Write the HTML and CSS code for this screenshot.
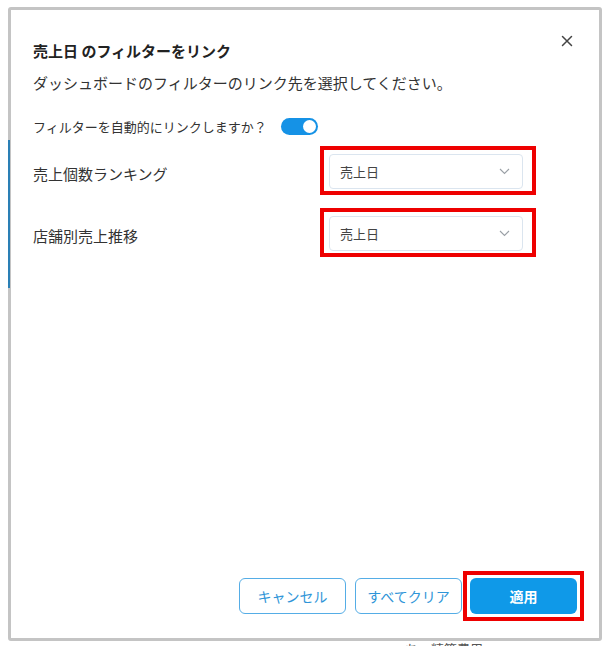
FILE: index.html
```html
<!DOCTYPE html>
<html lang="ja">
<head>
  <meta charset="utf-8">
  <title>フィルターをリンク</title>
  <link rel="stylesheet" href="styles.css">
</head>
<body>
  <div class="backdrop">
    <span class="edge-mark"></span>
    <div class="modal">
      <button class="close" aria-label="閉じる">
        <svg width="12" height="12" viewBox="0 0 12 12" fill="none" stroke="#444" stroke-width="1.5" stroke-linecap="round">
          <path d="M1.5 1.5l9 9M10.5 1.5l-9 9"/>
        </svg>
      </button>

      <h2 class="title">売上日 のフィルターをリンク</h2>
      <p class="desc">ダッシュボードのフィルターのリンク先を選択してください。</p>

      <div class="auto-link">
        <span>フィルターを自動的にリンクしますか？</span>
        <span class="toggle"><span class="knob"></span></span>
      </div>

      <div class="row">
        <span class="row-label">売上個数ランキング</span>
        <div class="mark mark-select">
          <div class="select">
            <span>売上日</span>
            <svg width="11" height="7" viewBox="0 0 11 7" fill="none" stroke="#9aa0a6" stroke-width="1.1">
              <path d="M1 1l4.5 4.5L10 1"/>
            </svg>
          </div>
        </div>
      </div>

      <div class="row">
        <span class="row-label">店舗別売上推移</span>
        <div class="mark mark-select">
          <div class="select">
            <span>売上日</span>
            <svg width="11" height="7" viewBox="0 0 11 7" fill="none" stroke="#9aa0a6" stroke-width="1.1">
              <path d="M1 1l4.5 4.5L10 1"/>
            </svg>
          </div>
        </div>
      </div>

      <div class="footer">
        <button class="btn btn-outline">キャンセル</button>
        <button class="btn btn-outline">すべてクリア</button>
        <div class="mark mark-btn">
          <button class="btn btn-primary">適用</button>
        </div>
      </div>
    </div>
  </div>
  <div class="below">ち　精算費用</div>
</body>
</html>
```

FILE: styles.css
```css
html, body { margin: 0; padding: 0; }
body {
  background: #fff;
  font-family: "Noto Sans CJK JP", "Noto Sans", sans-serif;
  color: #333;
  overflow: hidden;
}

.backdrop {
  position: relative;
  margin: 7px 0 0 8px;
  width: 588px;
  height: 628px;
  border: 3px solid #c4c4c4;
  border-radius: 3px;
}
.edge-mark {
  position: absolute;
  left: -3px;
  top: 130px;
  width: 2px;
  height: 148px;
  background: #2a7fb5;
}

.modal {
  position: relative;
  box-sizing: border-box;
  height: 100%;
  background: #fff;
  border-radius: 4px;
  padding: 31px 15px 17px 22px;
  display: flex;
  flex-direction: column;
}

.close {
  position: absolute;
  top: 21px;
  right: 22px;
  width: 20px;
  height: 20px;
  padding: 0;
  border: none;
  background: none;
  display: flex;
  align-items: center;
  justify-content: center;
}

.title {
  margin: 0;
  font-size: 15px;
  line-height: 20px;
  font-weight: bold;
  color: #222;
}
.desc {
  margin: 12px 0 0;
  font-size: 15px;
  line-height: 20px;
  color: #333;
}

.auto-link {
  margin-top: 25px;
  display: flex;
  align-items: center;
  font-size: 13px;
  line-height: 17px;
  color: #333;
}
.toggle {
  margin-left: 14px;
  width: 37px;
  height: 17px;
  border-radius: 9px;
  background: #1592e6;
  position: relative;
}
.knob {
  position: absolute;
  right: 2px;
  top: 2px;
  width: 13px;
  height: 13px;
  border-radius: 50%;
  background: #fff;
}

.row {
  display: flex;
  align-items: center;
  margin-top: 11px;
}
.row + .row { margin-top: 13px; }
.row-label {
  width: 287px;
  font-size: 15px;
  line-height: 20px;
  margin-top: 7px;
}

.mark { border: 4px solid #ee0000; }
.mark-select { padding: 4px 9px 2px 5px; }
.mark-btn { padding: 3px; }

.select {
  box-sizing: border-box;
  width: 194px;
  height: 35px;
  border: 1px solid #dbe5ef;
  border-radius: 4px;
  display: flex;
  align-items: center;
  justify-content: space-between;
  padding: 0 12px 0 10px;
  font-size: 13px;
  color: #444;
}

.footer {
  margin-top: auto;
  display: flex;
  align-items: center;
  justify-content: flex-end;
}
.btn {
  box-sizing: border-box;
  width: 107px;
  height: 36px;
  border-radius: 6px;
  font-family: inherit;
  font-size: 14px;
  padding: 0;
}
.btn-outline {
  background: #fff;
  border: 1px solid #55ade6;
  color: #2f95d8;
  margin-right: 9px;
}
.btn-outline + .btn-outline { margin-right: 1px; }
.btn-primary {
  background: #0f99e8;
  border: none;
  color: #fff;
  font-weight: bold;
  display: block;
}

.below {
  margin: 0 0 0 405px;
  font-size: 13px;
  color: #555;
  line-height: 16px;
}
```
